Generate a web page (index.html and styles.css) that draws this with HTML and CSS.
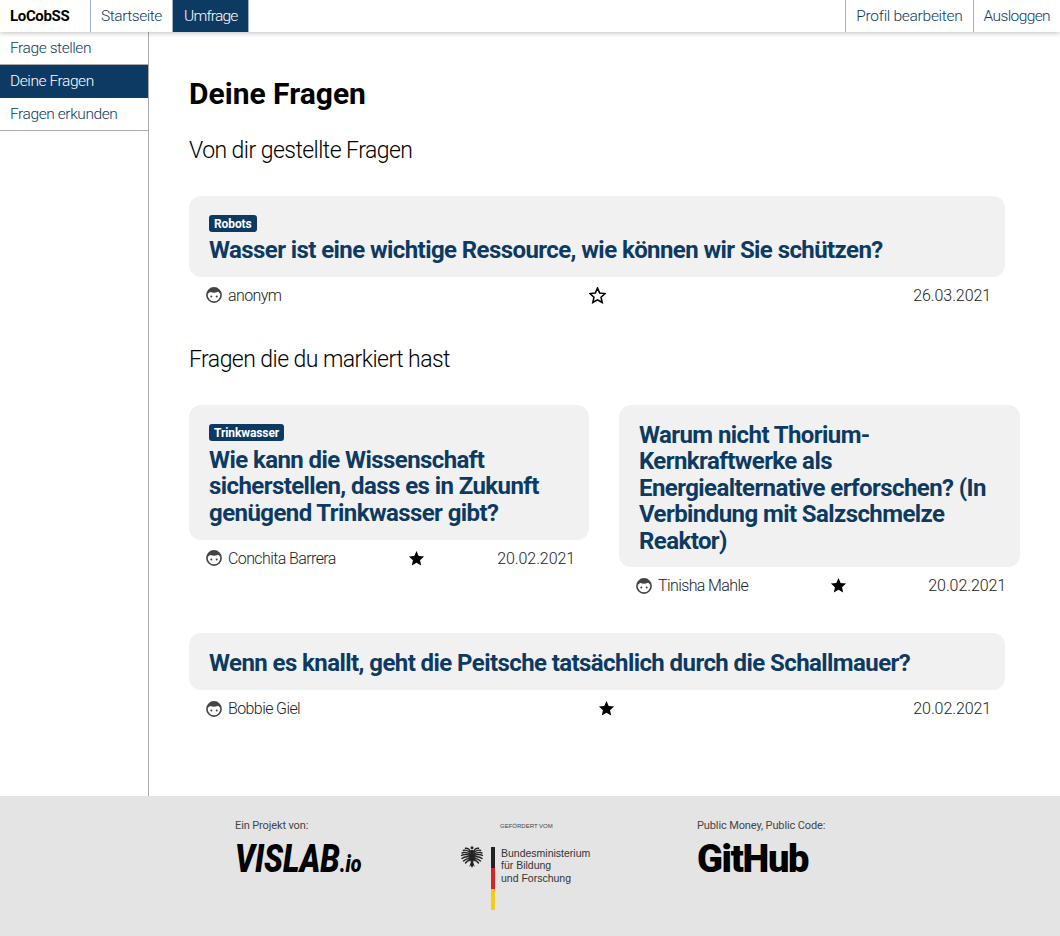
FILE: index.html
```html
<!DOCTYPE html>
<html lang="de">
<head>
<meta charset="utf-8">
<title>LoCobSS</title>
<link rel="stylesheet" href="styles.css">
</head>
<body>
<svg class="defs" width="0" height="0" aria-hidden="true">
  <symbol id="face" viewBox="0 0 16 16">
    <circle cx="8" cy="8" r="7.100" fill="#fff" stroke="#444" stroke-width="1.600"/>
    <path d="M1 8.500C.8 3.500 4.500 1 8 1s7.200 2.500 7 7.500c-.8-1.800-1.800-3-3-3.700-2.500 1.300-5.500 1.300-7.500.2C3 5.700 1.800 6.800 1 8.500z" fill="#444"/>
    <circle cx="5.300" cy="9.400" r="1" fill="#444"/>
    <circle cx="10.700" cy="9.400" r="1" fill="#444"/>
  </symbol>
  <symbol id="star" viewBox="0 0 24 24">
    <path d="M12 1.500l3.100 7 7.600.8-5.700 5.100 1.600 7.500L12 18.100l-6.600 3.800L7 14.400 1.300 9.300l7.600-.8z"/>
  </symbol>
</svg>
<header class="topbar">
  <a class="brand">LoCobSS</a>
  <nav class="topnav">
    <a class="toplink">Startseite</a>
    <a class="toplink toplink-active">Umfrage</a>
  </nav>
  <nav class="topnav topnav-right">
    <a class="toplink">Profil bearbeiten</a>
    <a class="toplink">Ausloggen</a>
  </nav>
</header>
<div class="middle">
  <aside class="sidebar">
    <a class="sidelink">Frage stellen</a>
    <a class="sidelink sidelink-active">Deine Fragen</a>
    <a class="sidelink">Fragen erkunden</a>
  </aside>
  <main class="content">
    <h1 class="page-title">Deine Fragen</h1>
    <h2 class="section-title">Von dir gestellte Fragen</h2>
    <article class="question">
      <div class="card">
        <span class="tag">Robots</span>
        <h3 class="card-title">Wasser ist eine wichtige Ressource, wie können wir Sie schützen?</h3>
      </div>
      <div class="meta">
        <span class="author"><svg class="face"><use href="#face"/></svg>anonym</span>
        <svg class="star star-empty"><use href="#star"/></svg>
        <span class="date">26.03.2021</span>
      </div>
    </article>
    <h2 class="section-title section-second">Fragen die du markiert hast</h2>
    <div class="pair">
      <article class="question question-half">
        <div class="card">
          <span class="tag">Trinkwasser</span>
          <h3 class="card-title">Wie kann die Wissenschaft sicherstellen, dass es in Zukunft genügend Trinkwasser gibt?</h3>
        </div>
        <div class="meta">
          <span class="author"><svg class="face"><use href="#face"/></svg>Conchita Barrera</span>
          <svg class="star"><use href="#star"/></svg>
          <span class="date">20.02.2021</span>
        </div>
      </article>
      <article class="question question-half">
        <div class="card">
          <h3 class="card-title">Warum nicht Thorium-Kernkraftwerke als Energiealternative erforschen? (In Verbindung mit Salzschmelze Reaktor)</h3>
        </div>
        <div class="meta">
          <span class="author"><svg class="face"><use href="#face"/></svg>Tinisha Mahle</span>
          <svg class="star"><use href="#star"/></svg>
          <span class="date">20.02.2021</span>
        </div>
      </article>
    </div>
    <article class="question question-last">
      <div class="card">
        <h3 class="card-title">Wenn es knallt, geht die Peitsche tatsächlich durch die Schallmauer?</h3>
      </div>
      <div class="meta">
        <span class="author"><svg class="face"><use href="#face"/></svg>Bobbie Giel</span>
        <svg class="star"><use href="#star"/></svg>
        <span class="date">20.02.2021</span>
      </div>
    </article>
  </main>
</div>
<footer class="footer">
  <div class="partner partner-vislab">
    <p class="partner-label">Ein Projekt von:</p>
    <p class="vislab">VISLAB<span class="vislab-io">.io</span></p>
  </div>
  <div class="partner partner-bmbf">
    <p class="bmbf-label">GEFÖRDERT VOM</p>
    <div class="bmbf">
      <svg class="eagle" viewBox="0 0 24 24">
        <g fill="#222">
          <circle cx="12" cy="2.800" r="1.500"/>
          <path d="M10.300 5h3.400l.5 9-1 3 1.500 5-1.500-1.500-1.200 2.500-1.200-2.500L9.300 22l1.500-5-1-3z"/>
        </g>
        <g fill="none" stroke="#222" stroke-width="1.400" stroke-linecap="round">
          <path d="M10 6C9 4 7.500 3 5.500 3.300M10 7.500C8 5.800 5 4.800 3.300 5.500M10 9C7.500 7.500 4 7 2 8M10 10.500C7.500 9.500 3.500 9.300 1.500 10.500M10 12C7.500 11.500 3.500 12 2 13.500M10 13.500C7.500 13.500 5 14.500 3.500 16M10 15C8 15.500 6.500 16.500 5.500 18"/>
          <path d="M14 6c1-2 2.500-3 4.500-2.700M14 7.500c2-1.700 5-2.700 6.700-2M14 9c2.500-1.500 6-2 8-1M14 10.500c2.500-1 6.500-1.200 8.500 0M14 12c2.500-.5 6.500 0 8 1.500M14 13.500c2.500 0 5 1 6.500 2.500M14 15c2 .5 3.500 1.500 4.500 3"/>
        </g>
      </svg>
      <div class="flag"><span class="flag-black"></span><span class="flag-red"></span><span class="flag-gold"></span></div>
      <p class="bmbf-name">Bundesministerium<br>für Bildung<br>und Forschung</p>
    </div>
  </div>
  <div class="partner partner-github">
    <p class="partner-label">Public Money, Public Code:</p>
    <p class="github">GitHub</p>
  </div>
</footer>
</body>
</html>
```
FILE: styles.css
```css
* { box-sizing: border-box; }
html, body { margin: 0; height: 100%; }
body {
  display: flex;
  flex-direction: column;
  height: 936px;
  overflow: hidden;
  background: #fff;
  color: #000;
  font-family: Roboto, "Noto Sans", sans-serif;
  font-weight: 300;
}
.defs { position: absolute; }
p, h1, h2, h3 { margin: 0; }

.topbar {
  display: flex;
  flex: none;
  height: 32px;
  background: #fff;
  box-shadow: 0 1px 5px rgba(0, 0, 0, .25);
  position: relative;
  z-index: 1;
}
.brand {
  width: 91px;
  padding-left: 10px;
  border-right: 1px solid #9fb1c2;
  font-size: 15px;
  font-weight: 700;
  line-height: 32px;
  letter-spacing: -.35px;
}
.topnav { display: flex; }
.topnav-right { margin-left: auto; }
.toplink {
  padding: 0 10px;
  border-right: 1px solid #9fb1c2;
  color: #0d3a62;
  font-size: 15.500px;
  line-height: 33px;
  letter-spacing: -.45px;
}
.topnav-right .toplink { border-right: 0; border-left: 1px solid #9fb1c2; letter-spacing: -.28px; }
.topnav-right .toplink:last-child { letter-spacing: -.6px; }
.toplink-active { padding: 0 10px 0 11px; background: #0d3a62; color: #fff; letter-spacing: -.75px; }

.middle { display: flex; flex: 1; min-height: 0; }
.sidebar {
  flex: none;
  width: 149px;
  border-right: 1px solid #aaa;
}
.sidelink {
  display: block;
  height: 33px;
  padding-left: 10px;
  border-bottom: 1px solid #aaa;
  color: #0d3a62;
  font-size: 15.500px;
  line-height: 33px;
  letter-spacing: -.42px;
}
.sidelink-active { background: #0d3a62; color: #fff; border-bottom-color: #0d3a62; }

.content { flex: 1; padding: 43px 0 0 40px; min-width: 0; }
.page-title { font-size: 30px; font-weight: 700; line-height: 38px; }
.section-title { margin-top: 23px; font-size: 23px; font-weight: 300; line-height: 30px; letter-spacing: -.55px; }
.section-second { margin-top: 31px; }

.question { width: 816px; margin-top: 30px; }
.card {
  padding: 17px 20px 13.500px;
  border-radius: 12px;
  background: #f1f1f1;
}
.tag {
  display: block;
  width: fit-content;
  height: 17px;
  margin: 2px 0 5px;
  padding: 0 5px;
  border-radius: 3px;
  background: #0d3a62;
  color: #fff;
  font-size: 12px;
  font-weight: 700;
  line-height: 18px;
  letter-spacing: -.1px;
}
.question-half .tag { margin-bottom: 6px; }
.card-title {
  color: #0d3a62;
  font-size: 24px;
  font-weight: 700;
  line-height: 26.400px;
  letter-spacing: -.58px;
}
.meta {
  display: flex;
  align-items: center;
  justify-content: space-between;
  height: 37px;
  padding: 0 14px 0 17px;
  font-size: 16px;
  color: #222;
}
.author { display: flex; align-items: center; gap: 6px; letter-spacing: -.6px; }
.date { letter-spacing: -.1px; }
.face { width: 16px; height: 16px; flex: none; }
.star { width: 17px; height: 17px; flex: none; fill: #000; }
.star-empty { fill: none; stroke: #000; stroke-width: 2.200; }

.pair { display: flex; align-items: flex-start; gap: 30px; margin-top: 30px; }
.question-half { width: 400px; margin-top: 0; }
.question-half + .question-half { width: 401px; }
.question-last { margin-top: 29px; }

.footer {
  flex: none;
  height: 140px;
  display: flex;
  background: #e4e4e4;
  padding: 23px 0 0 235px;
}
.partner-vislab { width: 225px; }
.partner-bmbf { width: 237px; }
.partner-label { font-size: 11px; font-weight: 400; line-height: 14px; color: #444; letter-spacing: -.12px; }
.vislab {
  width: fit-content;
  margin-top: 6px;
  color: #000;
  font-size: 38px;
  font-style: italic;
  font-weight: 900;
  line-height: 40px;
  transform: scaleX(.82);
  transform-origin: left center;
}
.vislab-io { font-size: 24px; }
.github {
  margin-top: 4px;
  color: #000;
  font-size: 38px;
  font-weight: 900;
  line-height: 44px;
  letter-spacing: -1.300px;
}
.bmbf-label { margin-left: 40px; font-family: "Liberation Sans", sans-serif; font-size: 6px; font-weight: 400; line-height: 14px; color: #444; }
.bmbf { display: flex; align-items: flex-start; margin-top: 14px; }
.eagle { width: 24px; height: 24px; flex: none; margin-top: -2px; }
.flag { display: flex; flex-direction: column; width: 4px; margin: 0 6px 0 7px; flex: none; }
.flag span { display: block; height: 21px; }
.flag-black { background: #222; }
.flag-red { background: #d8232a; }
.flag-gold { background: #f5cc16; }
.bmbf-name { font-family: "Liberation Sans", sans-serif; font-size: 10.500px; font-weight: 400; line-height: 12.300px; color: #333; }
```
